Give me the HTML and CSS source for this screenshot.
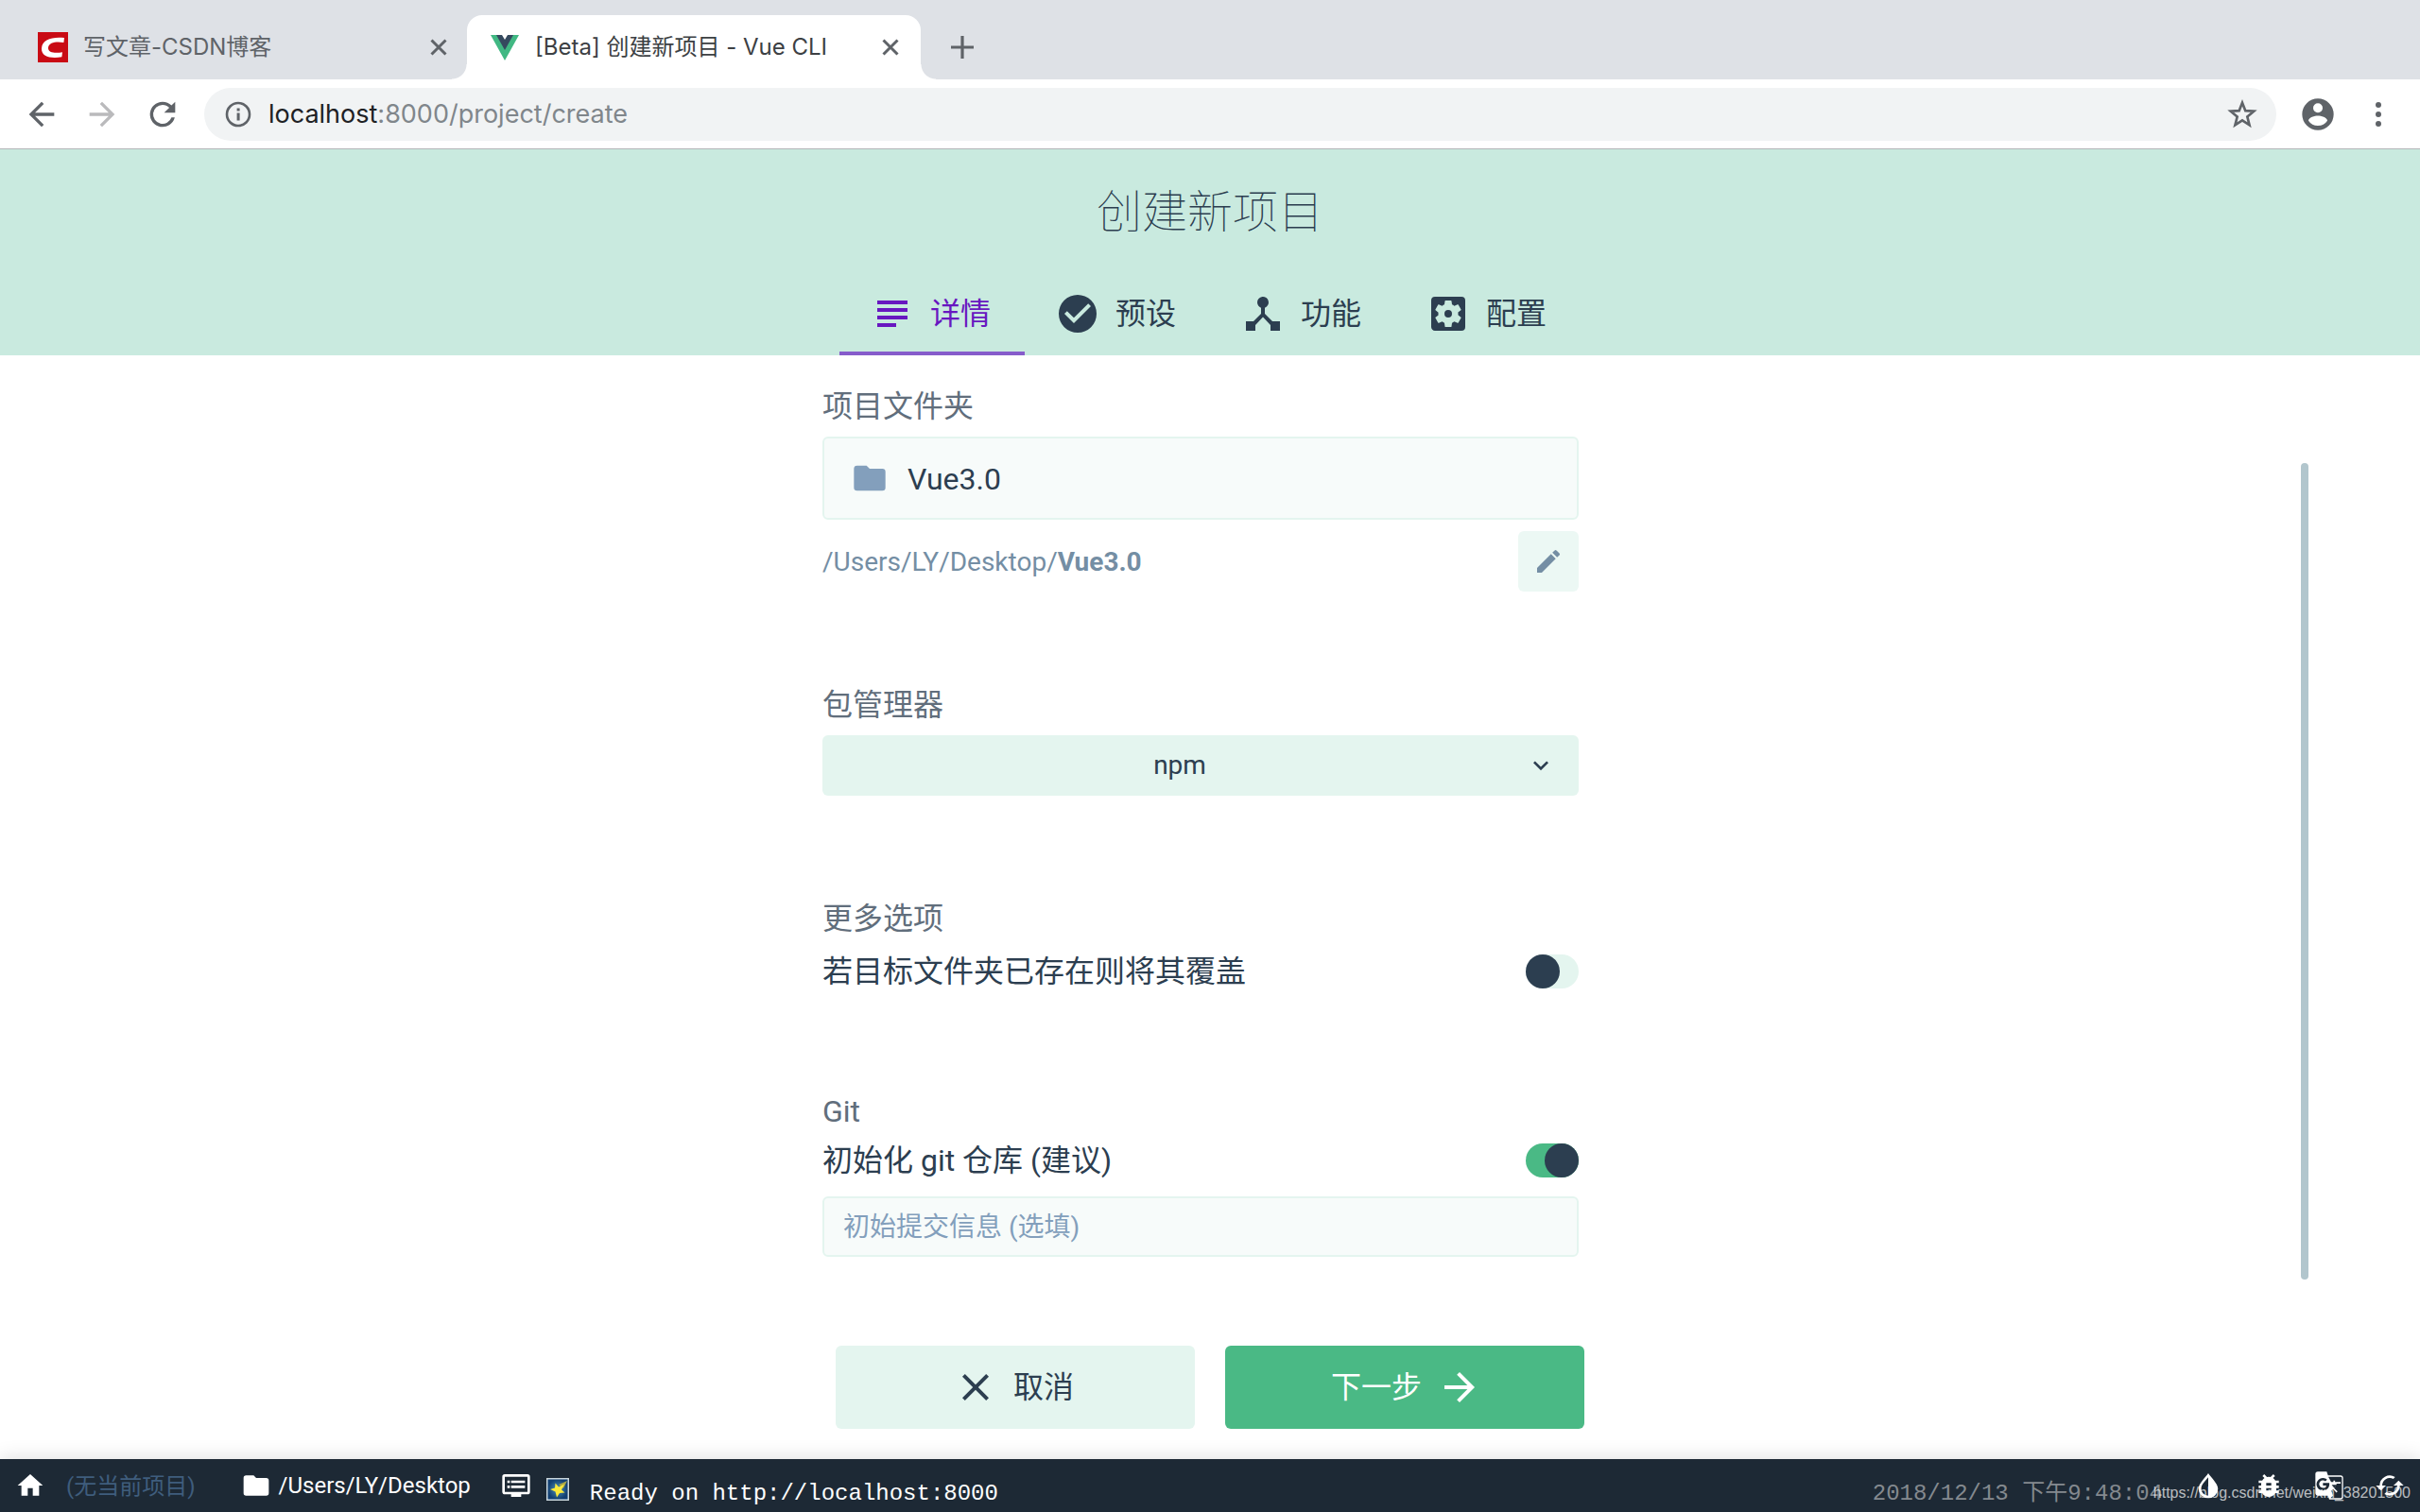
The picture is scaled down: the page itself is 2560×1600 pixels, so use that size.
FILE: index.html
```html
<!DOCTYPE html>
<html lang="zh-CN">
<head>
<meta charset="utf-8">
<title>[Beta] 创建新项目 - Vue CLI</title>
<link rel="stylesheet" href="styles.css">
</head>
<body>
<div class="window">
  <div class="tabstrip">
    <div class="browser-tab">
      <svg class="favicon" viewBox="0 0 32 32"><rect width="32" height="32" fill="#c90a14"/><path d="M28 6l-.6 5C20 9.800 11.500 10.500 11 16.500c-.4 5.500 7.500 6 15 4.800l-.6 5C14 28 3.700 26.500 4 17.200 4.500 7.500 15 4.800 28 6z" fill="#fff"/></svg>
      <span class="tab-title">写文章-CSDN博客</span>
      <button class="plain" aria-label="关闭"><svg class="small-icon" viewBox="0 0 24 24"><path d="M4.500 4.500l15 15M19.500 4.500l-15 15" stroke="#5f6368" stroke-width="3" fill="none"/></svg></button>
    </div>
    <div class="browser-tab current">
      <svg class="favicon" viewBox="0 0 32 32"><path d="M1 3h7l8 13 8-13h7L16 30z" fill="#41b883"/><path d="M7 3h6l3 5 3-5h6l-9 16z" fill="#35495e"/></svg>
      <span class="tab-title">[Beta] 创建新项目 - Vue CLI</span>
      <button class="plain" aria-label="关闭"><svg class="small-icon" viewBox="0 0 24 24"><path d="M4.500 4.500l15 15M19.500 4.500l-15 15" stroke="#5f6368" stroke-width="3" fill="none"/></svg></button>
    </div>
    <button class="plain new-tab" aria-label="新标签页"><svg class="small-icon" viewBox="0 0 24 24"><path d="M12 0v24M0 12h24" stroke="#5f6368" stroke-width="3.200" fill="none"/></svg></button>
  </div>

  <div class="toolbar">
    <button class="plain" aria-label="后退"><svg class="nav-icon" viewBox="0 0 24 24"><path d="M20 11H7.830l5.590-5.590L12 4l-8 8 8 8 1.410-1.410L7.830 13H20z" fill="#5f6368"/></svg></button>
    <button class="plain" aria-label="前进"><svg class="nav-icon" viewBox="0 0 24 24"><path d="M12 4l-1.410 1.410L16.170 11H4v2h12.170l-5.580 5.590L12 20l8-8z" fill="#bababc"/></svg></button>
    <button class="plain" aria-label="刷新"><svg class="nav-icon" viewBox="0 0 24 24"><path d="M17.650 6.350A7.960 7.960 0 0 0 12 4a8 8 0 1 0 7.730 10h-2.080A6 6 0 1 1 12 6c1.660 0 3.140.69 4.220 1.780L13 11h7V4z" fill="#5f6368"/></svg></button>
    <div class="address">
      <svg class="info-icon" viewBox="0 0 28 28"><circle cx="14" cy="14" r="12" fill="none" stroke="#5f6368" stroke-width="2.600"/><path d="M12.600 12.500h3v8h-3zM12.600 7.500h3v3h-3z" fill="#5f6368"/></svg>
      <span class="url"><b>localhost</b>:8000/project/create</span>
      <button class="plain" aria-label="收藏"><svg class="star-icon" viewBox="0 0 30 30"><path d="M15 3.500l3.100 7.900 8.400.5-6.500 5.400 2.100 8.300-7.100-4.600-7.100 4.600L10 17.300l-6.500-5.400 8.400-.5z" fill="none" stroke="#5f6368" stroke-width="2.500"/></svg></button>
    </div>
    <button class="plain" aria-label="用户"><svg class="nav-icon" viewBox="0 0 24 24"><path d="M12 2a10 10 0 1 0 0 20 10 10 0 0 0 0-20zm0 3a3 3 0 1 1 0 6 3 3 0 0 1 0-6zm0 14.200a7.200 7.200 0 0 1-6-3.220c.03-1.990 4-3.080 6-3.080s5.970 1.090 6 3.080a7.200 7.200 0 0 1-6 3.220z" fill="#5f6368"/></svg></button>
    <button class="plain menu" aria-label="菜单"><svg class="mini" viewBox="0 0 32 32"><g fill="#5f6368"><circle cx="16" cy="6" r="3"/><circle cx="16" cy="16" r="3"/><circle cx="16" cy="26" r="3"/></g></svg></button>
  </div>

  <header class="page-header">
    <h1>创建新项目</h1>
    <nav class="steps">
      <a class="step active" href="#details"><svg class="icon" viewBox="0 0 24 24"><path d="M4 5h16v2H4zM4 9h16v2H4zM4 13h16v2H4zM4 17h10v2H4z"/></svg>详情</a>
      <a class="step" href="#presets"><svg class="icon" viewBox="0 0 24 24"><path d="M12 2a10 10 0 1 0 0 20 10 10 0 0 0 0-20zm-2 15l-5-5 1.410-1.410L10 14.170l7.590-7.590L19 8z"/></svg>预设</a>
      <a class="step" href="#features"><svg class="icon" viewBox="0 0 24 24"><path d="M17 16l-4-4V8.820A3 3 0 1 0 9 6c0 1.300.84 2.400 2 2.820V12l-4 4H3v5h5v-3.050l4-4.200 4 4.200V21h5v-5z"/></svg>功能</a>
      <a class="step" href="#config"><svg class="icon" viewBox="0 0 24 24"><path d="M12 10a2 2 0 1 0 0 4 2 2 0 0 0 0-4zm7-7H5a2 2 0 0 0-2 2v14c0 1.100.9 2 2 2h14a2 2 0 0 0 2-2V5a2 2 0 0 0-2-2zm-1.750 9c0 .23-.02.46-.05.680l1.480 1.160c.13.11.17.3.08.450l-1.400 2.420c-.09.150-.27.210-.43.150l-1.740-.7c-.36.280-.76.510-1.180.690l-.26 1.850c-.03.170-.18.300-.35.300h-2.800c-.17 0-.32-.13-.35-.29l-.26-1.850c-.43-.18-.82-.41-1.180-.69l-1.740.7c-.16.060-.34 0-.43-.15l-1.400-2.420a.35.35 0 0 1 .08-.450l1.480-1.160a5.600 5.600 0 0 1 0-1.370l-1.480-1.160a.35.35 0 0 1-.08-.450l1.400-2.420c.09-.15.27-.21.430-.15l1.740.7c.36-.28.760-.51 1.180-.69l.26-1.850c.03-.17.180-.3.350-.3h2.800c.17 0 .32.130.35.290l.26 1.850c.43.180.82.410 1.180.690l1.740-.7c.16-.06.34 0 .43.150l1.400 2.420c.09.150.05.340-.08.450l-1.480 1.160c.03.230.05.460.05.690z"/></svg>配置</a>
    </nav>
  </header>

  <main class="content">
    <form class="form" id="create">
      <section class="group">
        <label class="caption" for="folder">项目文件夹</label>
        <div class="folder-box">
          <svg class="folder-icon" viewBox="0 0 24 24"><path d="M10 4H4a2 2 0 0 0-2 2v12a2 2 0 0 0 2 2h16a2 2 0 0 0 2-2V8a2 2 0 0 0-2-2h-8z"/></svg>
          <input id="folder" type="text" value="Vue3.0">
        </div>
        <div class="path-row">
          <span class="path">/Users/LY/Desktop/<b>Vue3.0</b></span>
          <button type="button" class="edit" aria-label="编辑"><svg class="mini" viewBox="0 0 24 24"><path d="M3 17.250V21h3.750L17.810 9.940l-3.750-3.750zM20.710 7.040a1 1 0 0 0 0-1.410l-2.340-2.340a1 1 0 0 0-1.410 0l-1.830 1.830 3.750 3.750z"/></svg></button>
        </div>
      </section>

      <section class="group">
        <label class="caption" for="manager">包管理器</label>
        <div class="select-box">
          <select id="manager"><option>npm</option><option>yarn</option></select>
          <svg class="mini" viewBox="0 0 24 24"><path d="M7.410 8.590L12 13.170l4.590-4.580L18 10l-6 6-6-6z"/></svg>
        </div>
      </section>

      <section class="group more">
        <div class="caption">更多选项</div>
        <label class="switch-row">若目标文件夹已存在则将其覆盖<input class="switch" type="checkbox"></label>
      </section>

      <section class="group git">
        <div class="caption">Git</div>
        <label class="switch-row">初始化 git 仓库 (建议)<input class="switch" type="checkbox" checked></label>
        <input class="message" type="text" aria-label="初始提交信息" placeholder="初始提交信息 (选填)">
      </section>
    </form>
    <div class="scroll-thumb"></div>
  </main>

  <div class="actions">
    <button class="btn" type="button"><svg class="icon" viewBox="0 0 24 24"><path d="M19 6.410L17.590 5 12 10.590 6.410 5 5 6.410 10.590 12 5 17.590 6.410 19 12 13.410 17.590 19 19 17.590 13.410 12z"/></svg>取消</button>
    <button class="btn primary" type="submit" form="create">下一步<svg class="icon" viewBox="0 0 24 24"><path d="M12 4l-1.410 1.410L16.170 11H4v2h12.170l-5.580 5.590L12 20l8-8z"/></svg></button>
  </div>

  <footer class="status">
    <a class="home" href="#home" aria-label="主页"><svg class="mini" viewBox="0 0 24 24"><path d="M10 20v-6h4v6h5v-8h3L12 3 2 12h3v8z"/></svg></a>
    <span class="project">(无当前项目)</span>
    <span class="cwd"><svg class="mini" viewBox="0 0 24 24"><path d="M10 4H4a2 2 0 0 0-2 2v12a2 2 0 0 0 2 2h16a2 2 0 0 0 2-2V8a2 2 0 0 0-2-2h-8z"/></svg>/Users/LY/Desktop</span>
    <span class="log">
      <svg class="mini" viewBox="0 0 24 24"><path d="M21 3H3a2 2 0 0 0-2 2v12c0 1.100.9 2 2 2h5v2h8v-2h5a2 2 0 0 0 2-2V5a2 2 0 0 0-2-2zm0 14H3V5h18zM19 8H8v2h11zm0 4H8v2h11zM7 8H5v2h2zm0 4H5v2h2z"/></svg>
      <svg class="emoji" viewBox="0 0 24 24"><defs><radialGradient id="sky"><stop offset="0" stop-color="#4f94b8"/><stop offset="1" stop-color="#123f72"/></radialGradient></defs><rect width="24" height="24" fill="#c9d6dc"/><rect x="1.500" y="1.500" width="21" height="21" fill="url(#sky)"/><path d="M13 7l9-4-4 8z" fill="#a8a548"/><path d="M9.500 5.500l3.500 4 6-3-3 6 3.500 3-5.500.5L11 20.500l-1.500-6L4 12l5-1.500z" fill="#f9e93c"/></svg>
      <span class="mono">Ready on http://localhost:8000</span>
    </span>
    <span class="mono date">2018/12/13 下午9:48:04</span>
    <div class="tools">
      <button class="plain" aria-label="主题"><svg class="mini" viewBox="0 0 24 24"><path d="M12 2.200C10 5.500 4.300 10.200 4.300 14.600a7.700 7.400 0 0 0 15.400 0C19.700 10.200 14 5.500 12 2.200zM12 5.500V20a5.700 5.500 0 0 1-5.700-5.500C6.300 11.500 10 8 12 5.500z"/></svg></button>
      <button class="plain" aria-label="报告问题"><svg class="mini" viewBox="0 0 24 24"><path d="M20 8h-2.810a6 6 0 0 0-1.820-1.960L17 4.410 15.590 3l-2.170 2.170a6 6 0 0 0-2.830 0L8.410 3 7 4.410l1.620 1.630A6 6 0 0 0 6.810 8H4v2h2.090c-.05.330-.09.660-.09 1v1H4v2h2v1c0 .34.040.67.090 1H4v2h2.810a6 6 0 0 0 10.380 0H20v-2h-2.090c.05-.33.090-.66.090-1v-1h2v-2h-2v-1c0-.34-.04-.67-.09-1H20zm-6 8h-4v-2h4zm0-4h-4v-2h4z"/></svg></button>
      <button class="plain" aria-label="语言"><svg class="mini" viewBox="0 0 24 24"><path d="M21 4H11l-1-3H3a2 2 0 0 0-2 2v15c0 1.100.9 2 2 2h8l1 3h9a2 2 0 0 0 2-2V6a2 2 0 0 0-2-2zM7 16a5 5 0 1 1 3.300-8.700L8.900 8.600A3 3 0 1 0 9.800 12H7v-2h5a5 5 0 0 1-5 6zm15 5a1 1 0 0 1-1 1h-8l2-2-1.300-3.800 1.300-1.300 2.700 2.700.9-.9-2.700-2.700c.9-1 1.600-2.200 2-3.500H21V9.200h-4.400V8h-1.300v1.200h-1.800L11.300 5H21a1 1 0 0 1 1 1zm-8-9.500h3.600c-.4 1-.9 1.800-1.500 2.600-.5-.5-.9-1.100-1.200-1.700h-.4z"/></svg></button>
      <button class="plain" aria-label="刷新"><svg class="mini" viewBox="0 0 24 24"><path d="M19 8l-4 4h3a6 6 0 0 1-8.800 5.300l-1.460 1.460A8 8 0 0 0 20 12h3zM6 12a6 6 0 0 1 8.800-5.300l1.460-1.460A8 8 0 0 0 4 12H1l4 4 4-4z"/></svg></button>
    </div>
    <span class="watermark">https://blog.csdn.net/weixin_38201500</span>
  </footer>
</div>
</body>
</html>
```
FILE: styles.css
```css
* { box-sizing: border-box; }
body { margin: 0; background: #fff; color: #2c3e50; font-family: Roboto, "Noto Sans CJK SC", sans-serif; font-size: 32px; line-height: 40px; }
button, input, select { font: inherit; color: inherit; margin: 0; }
svg { display: block; flex: none; fill: currentColor; }
a { color: inherit; text-decoration: none; }
.plain { border: 0; padding: 0; background: none; }

.window { min-height: 100vh; display: flex; flex-direction: column; }

/* Browser chrome */
.tabstrip { height: 84px; background: #dee1e6; display: flex; align-items: stretch; padding: 16px 16px 0; font-family: Inter, "Noto Sans CJK SC", sans-serif; font-size: 24px; line-height: 32px; color: #5f6368; }
.browser-tab { width: 478px; display: flex; align-items: center; padding: 0 18px 0 24px; }
.browser-tab.current { width: 480px; background: #fff; border-radius: 16px 16px 0 0; color: #3c4043; position: relative; padding-right: 20px; }
.browser-tab.current::before, .browser-tab.current::after { content: ""; position: absolute; bottom: 0; width: 16px; height: 16px; }
.browser-tab.current::before { right: 100%; background: radial-gradient(circle at 0 0, transparent 15px, #fff 16px); }
.browser-tab.current::after { left: 100%; background: radial-gradient(circle at 100% 0, transparent 15px, #fff 16px); }
.favicon { width: 32px; height: 32px; margin-right: 16px; }
.tab-title { flex: 1; white-space: nowrap; }
.small-icon { width: 24px; height: 24px; }
.new-tab { margin-left: 32px; }

.toolbar { height: 74px; border-bottom: 1px solid #b4b6b9; display: flex; align-items: center; padding: 0 28px 0 24px; gap: 24px; }
.nav-icon { width: 40px; height: 40px; }
.menu { margin-left: 4px; }
.address { flex: 1; height: 56px; border-radius: 28px; background: #f1f3f4; display: flex; align-items: center; padding: 0 20px 0 22px; }
.info-icon { width: 28px; height: 28px; margin-right: 18px; }
.star-icon { width: 32px; height: 32px; }
.url { flex: 1; font-family: Inter, sans-serif; font-size: 27px; color: #80868b; }
.url b { font-weight: 400; color: #202124; }

/* Wizard header */
.page-header { height: 218px; background: #c9eadf; display: flex; flex-direction: column; align-items: center; justify-content: space-between; }
h1 { margin: 35px 0 0; font-size: 48px; line-height: 64px; font-weight: 100; }
.steps { display: flex; }
.step { width: 196px; height: 88px; padding: 4px 0 0 32px; display: flex; align-items: center; gap: 16px; border-bottom: 4px solid transparent; }
.step.active { color: #6817c0; border-color: #865ccb; }
.icon { width: 48px; height: 48px; }
.mini { width: 32px; height: 32px; }

/* Form */
.content { flex: 1; display: grid; grid-template-columns: 1fr 800px 1fr; padding: 34px 20px 0 0; }
.form { grid-column: 2; }
.group { margin-bottom: 110px; }
.group:first-child { margin-bottom: 100px; }
.group.more { margin-bottom: 108px; }
.group.git { margin-bottom: 64px; }
.caption { display: block; color: #616e7c; margin-bottom: 12px; }
.more .caption { margin-bottom: 16px; }
.folder-box { height: 88px; border: 2px solid #e4f5ef; border-radius: 6px; background: #f7fbfa; display: flex; align-items: center; padding: 0 28px; gap: 20px; }
.folder-icon { width: 40px; height: 40px; color: #839fbc; }
.folder-box input { flex: 1; border: 0; padding: 2px 0 0; background: none; }
.path-row { display: flex; align-items: center; justify-content: space-between; margin-top: 12px; font-size: 28px; color: #748ea4; }
.path { padding-top: 2px; }
.edit { width: 64px; height: 64px; border: 0; border-radius: 6px; padding: 16px; background: #ecf8f4; color: #748ea4; }
.select-box { height: 64px; border-radius: 6px; background: #e4f5ef; display: flex; align-items: center; padding-right: 24px; font-size: 28px; }
.select-box select { flex: 1; height: 64px; border: 0; background: none; appearance: none; text-align: center; padding: 0 0 0 12px; }
.switch-row { display: flex; align-items: center; justify-content: space-between; }
.switch { appearance: none; width: 56px; height: 36px; border-radius: 18px; background: #e4f5ef; display: flex; }
.switch::before { content: ""; width: 36px; height: 36px; border-radius: 50%; background: #2c3e50; }
.switch:checked { background: #4ab985; justify-content: flex-end; }
.message { width: 100%; height: 64px; margin-top: 18px; border: 2px solid #e4f5ef; border-radius: 6px; background: #f7fbfa; padding: 0 20px; font-size: 28px; display: block; }
.message::placeholder { color: #839fbc; opacity: 1; }
.scroll-thumb { grid-column: 3; justify-self: end; width: 8px; height: 864px; border-radius: 4px; background: #b2c6cd; margin: 80px 98px 0 0; }

.actions { display: flex; justify-content: center; gap: 32px; padding-bottom: 32px; }
.btn { width: 380px; height: 88px; border: 0; border-radius: 6px; background: #e4f5ef; display: flex; align-items: center; justify-content: center; gap: 16px; padding: 0 4px 0 0; }
.btn.primary { background: #4ab985; color: #fff; padding: 0 0 0 4px; }

/* Status bar */
.status { position: relative; height: 56px; background: #1d2935; color: #fff; font-size: 24px; line-height: 32px; display: flex; align-items: center; padding: 0 16px; box-shadow: 0 -2px 20px rgba(0, 0, 0, .12); white-space: nowrap; }
.project { margin: 0 48px 0 22px; padding-top: 2px; color: #3f5d7d; }
.cwd { display: flex; align-items: center; gap: 8px; }
.log { display: flex; align-items: center; flex: 1; margin-left: 32px; }
.emoji { width: 24px; height: 24px; margin: 8px 22px 0 16px; }
.mono { font-family: "Liberation Mono", "Noto Sans CJK SC", monospace; padding-top: 18px; }
.date { color: #84898f; margin-right: 32px; }
.tools { display: flex; gap: 32px; }
.watermark { position: absolute; right: 10px; bottom: 4px; font: 16px/32px "Liberation Sans", sans-serif; color: rgba(255, 255, 255, .7); }
```
